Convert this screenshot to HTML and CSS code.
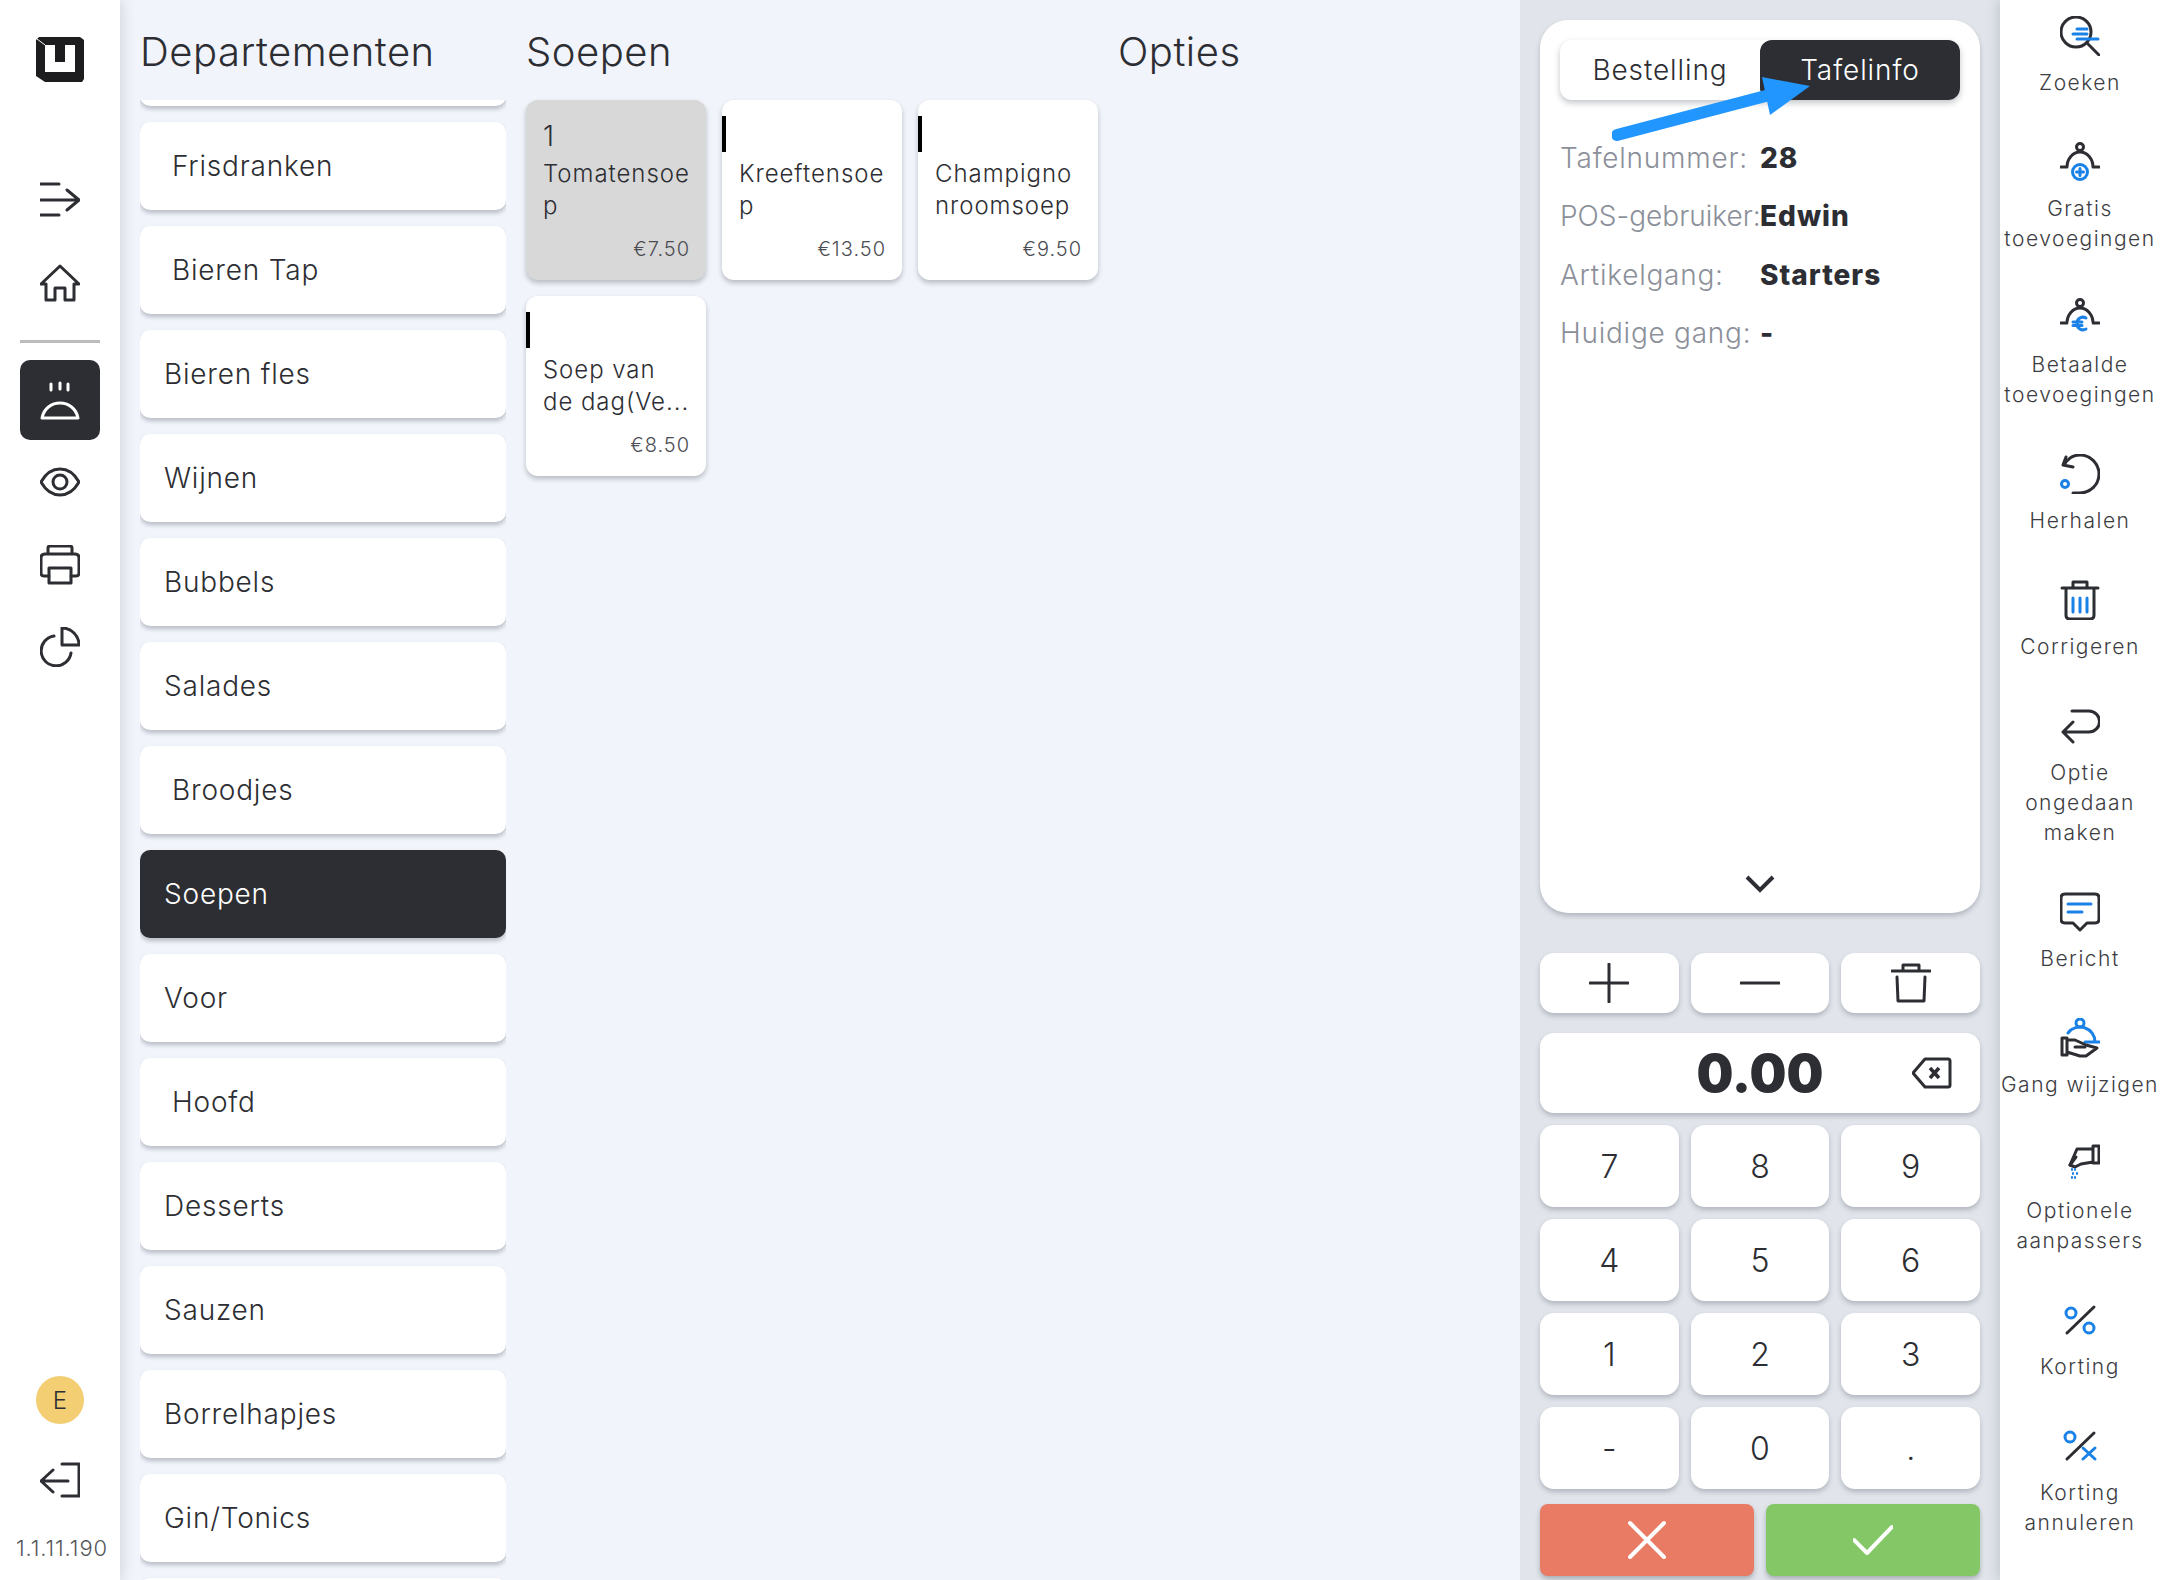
FILE: index.html
```html
<!DOCTYPE html>
<html lang="nl">
<head>
    <meta charset="UTF-8">
    <title>Kassa</title>
    <link rel="stylesheet" href="styles.css">
</head>
<body>
    <div class="app">
        <!-- linker menu -->
        <nav class="rail">
            <svg class="logo" viewBox="0 0 48 45">
                <path class="logo-body" d="M0 3 3 0H44L48 3V42L46 45H9L0 39Z"/>
                <path class="logo-u" d="M9 8H19V25H29V8H39V35H9Z"/>
                <path class="logo-line" d="M1 2 9 8"/>
            </svg>
            <div class="rail-nav">
                <div class="rail-btn">
                    <svg class="icon" viewBox="0 0 40 40"><path d="M0 4H19M0 20H39M27 10 39 20 27 30M0 35H19"/></svg>
                </div>
                <div class="rail-btn">
                    <svg class="icon" viewBox="0 0 40 40"><path d="M1 21 20 3 39 21H34V37H25V25H15V37H6V21Z"/></svg>
                </div>
                <div class="rail-sep"></div>
                <div class="rail-btn active">
                    <svg class="icon" viewBox="0 0 40 40"><path d="M11 4V10M20 3V9M28 4V10M2 38C4 28 12 23 20 23S36 28 38 38Z"/></svg>
                </div>
                <div class="rail-btn">
                    <svg class="icon" viewBox="0 0 40 40"><path d="M1 20C6 11 13 7 20 7S34 11 39 20C34 29 27 33 20 33S6 29 1 20Z"/><circle cx="20" cy="20" r="7"/></svg>
                </div>
                <div class="rail-btn">
                    <svg class="icon" viewBox="0 0 40 40"><path d="M8 8V3Q8 1 10 1H30Q32 1 32 3V8M9 31H4Q1 31 1 28V13Q1 9 5 9H35Q39 9 39 13V28Q39 31 36 31H31"/><path d="M9 23H31V38H9Z"/></svg>
                </div>
                <div class="rail-btn">
                    <svg class="icon" viewBox="0 0 40 40"><path d="M22 1A17 17 0 0 1 39 18H22Z"/><path d="M14 9A15 15 0 1 0 31 26"/></svg>
                </div>
            </div>
            <div class="rail-bottom">
                <div class="avatar">E</div>
                <svg class="icon" viewBox="0 0 40 40"><path d="M22 4H39V36H22M28 21H1M13 10 1 21 13 32"/></svg>
                <div class="version">1.1.11.190</div>
            </div>
        </nav>

        <main class="main">
            <section class="col-dept">
                <h2>Departementen</h2>
                <div class="dept-list">
                    <div class="dept dept-cut"></div>
                    <div class="dept indent">Frisdranken</div>
                    <div class="dept indent">Bieren Tap</div>
                    <div class="dept">Bieren fles</div>
                    <div class="dept">Wijnen</div>
                    <div class="dept">Bubbels</div>
                    <div class="dept">Salades</div>
                    <div class="dept indent">Broodjes</div>
                    <div class="dept selected">Soepen</div>
                    <div class="dept">Voor</div>
                    <div class="dept indent">Hoofd</div>
                    <div class="dept">Desserts</div>
                    <div class="dept">Sauzen</div>
                    <div class="dept">Borrelhapjes</div>
                    <div class="dept">Gin/Tonics</div>
                    <div class="dept"></div>
                </div>
            </section>

            <section class="col-products">
                <h2>Soepen</h2>
                <div class="product-grid">
                    <div class="product picked">
                        <div class="qty">1</div>
                        <div class="name">Tomatensoe<br>p</div>
                        <div class="price">€7.50</div>
                    </div>
                    <div class="product">
                        <span class="mark"></span>
                        <div class="qty"></div>
                        <div class="name">Kreeftensoe<br>p</div>
                        <div class="price">€13.50</div>
                    </div>
                    <div class="product">
                        <span class="mark"></span>
                        <div class="qty"></div>
                        <div class="name">Champigno<br>nroomsoep</div>
                        <div class="price">€9.50</div>
                    </div>
                    <div class="product">
                        <span class="mark"></span>
                        <div class="qty"></div>
                        <div class="name">Soep van<br>de dag(Ve...</div>
                        <div class="price">€8.50</div>
                    </div>
                </div>
            </section>

            <section class="col-options">
                <h2>Opties</h2>
            </section>
        </main>

        <aside class="order">
            <div class="order-card">
                <div class="tabs">
                    <div class="tab">Bestelling</div>
                    <div class="tab on">Tafelinfo</div>
                </div>
                <div class="info">
                    <div class="info-label">Tafelnummer:</div><div class="info-value">28</div>
                    <div class="info-label tight">POS-gebruiker:</div><div class="info-value">Edwin</div>
                    <div class="info-label">Artikelgang:</div><div class="info-value">Starters</div>
                    <div class="info-label">Huidige gang:</div><div class="info-value">-</div>
                </div>
                <svg class="chevron" viewBox="0 0 30 18"><path d="M2 2 15 15 28 2"/></svg>
            </div>

            <div class="keys-top">
                <div class="key"><svg class="icon" viewBox="0 0 40 40"><path d="M20 1V39M1 20H39"/></svg></div>
                <div class="key"><svg class="icon" viewBox="0 0 40 40"><path d="M1 20H39"/></svg></div>
                <div class="key"><svg class="icon" viewBox="0 0 40 40"><path d="M1 8H39M12 8V2H28V8M6 14 7 38H33L34 14"/></svg></div>
            </div>

            <div class="display">
                <span class="amount">0.00</span>
                <svg class="backspace" viewBox="0 0 40 32"><path d="M1 16 13 2H36Q38 2 38 4V28Q38 30 36 30H13Z"/><path class="x" d="M18 11 27 21M27 11 18 21"/></svg>
            </div>

            <div class="keypad">
                <div class="key">7</div>
                <div class="key">8</div>
                <div class="key">9</div>
                <div class="key">4</div>
                <div class="key">5</div>
                <div class="key">6</div>
                <div class="key">1</div>
                <div class="key">2</div>
                <div class="key">3</div>
                <div class="key">-</div>
                <div class="key">0</div>
                <div class="key">.</div>
            </div>

            <div class="actions">
                <div class="action cancel"><svg class="icon" viewBox="0 0 40 40"><path d="M3 3 37 37M37 3 3 37"/></svg></div>
                <div class="action confirm"><svg class="icon" viewBox="0 0 40 40"><path d="M1 20 14 33 39 7"/></svg></div>
            </div>
        </aside>

        <!-- rechter functies -->
        <nav class="tools">
            <div class="tool">
                <svg class="icon" viewBox="0 0 40 40"><circle cx="16" cy="16" r="15"/><path d="M27 27 39 39"/><path class="blue" d="M17 13H27M13 18H27M17 23H38"/></svg>
                <span>Zoeken</span>
            </div>
            <div class="tool">
                <svg class="icon" viewBox="0 0 40 40"><circle cx="20" cy="5" r="3.5"/><path d="M1 25H7M33 25H39M7 25A13 15 0 0 1 33 25"/><circle class="blue fill-white" cx="20" cy="30" r="7.5"/><path class="blue" d="M16.500 30H23.500M20 26.500V33.500"/></svg>
                <span>Gratis<br>toevoegingen</span>
            </div>
            <div class="tool">
                <svg class="icon" viewBox="0 0 40 40"><circle cx="20" cy="5" r="3.500"/><path d="M1 25H7M33 25H39M7 25A13 15 0 0 1 33 25"/><path class="white-gap" d="M11 25H29"/><path class="blue" d="M26 20A6 6 0 0 0 17 25.500A6 6 0 0 0 26 31M13 24H22M13 27.500H22"/></svg>
                <span>Betaalde<br>toevoegingen</span>
            </div>
            <div class="tool">
                <svg class="icon" viewBox="0 0 40 40"><path d="M4 11C8 4 14 1 20 1A19 19 0 0 1 20 39H13M6 3 3 11 13 13"/><circle class="blue" cx="5" cy="30" r="3.500"/></svg>
                <span>Herhalen</span>
            </div>
            <div class="tool">
                <svg class="icon" viewBox="0 0 40 40"><path d="M2 8H38M13 8V2H27V8M6 8V35Q6 39 10 39H30Q34 39 34 35V8"/><path class="blue" d="M13 18V32M20 18V32M27 18V32"/></svg>
                <span>Corrigeren</span>
            </div>
            <div class="tool">
                <svg class="icon" viewBox="0 0 40 40"><path d="M12 5H29A10 10 0 0 1 29 26H3M13 16 3 26 13 36"/></svg>
                <span>Optie<br>ongedaan<br>maken</span>
            </div>
            <div class="tool">
                <svg class="icon" viewBox="0 0 40 40"><path d="M5 2H35Q39 2 39 6V27Q39 31 35 31H27L20 38 13 31H5Q1 31 1 27V6Q1 2 5 2Z"/><path class="blue" d="M8 12H31M8 20H22"/></svg>
                <span>Bericht</span>
            </div>
            <div class="tool">
                <svg class="icon" viewBox="0 0 40 40"><circle class="blue" cx="20" cy="5" r="4"/><path class="blue" d="M8 15A15 15 0 0 1 35 24M25 24H41"/><path d="M2 20H7V37H2ZM7 22H15L26 27 37 30 26 38H20L7 34"/><path d="M15 29H25"/></svg>
                <span>Gang wijzigen</span>
            </div>
            <div class="tool">
                <svg class="icon" viewBox="0 0 40 40"><path d="M33 2H39V19H33ZM33 5H17L10 21 15 23 21 20 33 18"/><path d="M16 13 10 21"/><path class="blue dots" d="M12 25V26M15 25V26M13 29V30M17 29V30M12 33V34M15 33V34"/></svg>
                <span>Optionele<br>aanpassers</span>
            </div>
            <div class="tool">
                <svg class="icon" viewBox="0 0 40 40"><circle class="blue" cx="11" cy="13" r="5"/><circle class="blue" cx="29" cy="28" r="5"/><path d="M34 7 7 33"/></svg>
                <span>Korting</span>
            </div>
            <div class="tool">
                <svg class="icon" viewBox="0 0 40 40"><circle class="blue" cx="10" cy="11" r="5"/><path d="M34 7 7 33"/><path class="blue" d="M23 22 35 33M35 22 23 33"/></svg>
                <span>Korting<br>annuleren</span>
            </div>
        </nav>

        <!-- blauwe aanwijspijl over de tabs -->
        <svg class="arrow" viewBox="0 0 220 80">
            <path class="arrow-line" d="M5 58 165 16"/>
            <path class="arrow-head" d="M150 0 198 9 158 38Z"/>
        </svg>
    </div>
</body>
</html>
```

FILE: styles.css
```css
* {
    box-sizing: border-box;
}

body {
    margin: 0;
    font-family: Inter, "Liberation Sans", sans-serif;
    color: #2d2e33;
    background-color: #f1f4fa;
}

.app {
    position: relative;
    display: flex;
    width: 2160px;
    height: 1580px;
    overflow: hidden;
}

.icon {
    width: 40px;
    height: 40px;
    fill: none;
    stroke: #2d2e33;
    stroke-width: 3;
    stroke-linecap: round;
    stroke-linejoin: round;
    flex-shrink: 0;
}

.icon .blue {
    stroke: #1a81e6;
}

.icon .fill-white {
    fill: white;
}

.icon .white-gap {
    stroke: white;
    stroke-width: 5;
}

.icon .dots {
    stroke-width: 2;
}

/* linker menu */
.rail {
    position: relative;
    z-index: 2;
    display: flex;
    flex-direction: column;
    align-items: center;
    width: 120px;
    height: 100%;
    padding: 37px 0 17px;
    background: white;
    box-shadow: 2px 0 12px rgba(60, 70, 90, 0.18);
}

.logo {
    width: 48px;
    height: 45px;
    margin-bottom: 78px;
}

.logo-body {
    fill: #1d1d1f;
}

.logo-u {
    fill: white;
}

.logo-line {
    stroke: white;
    stroke-width: 1;
    fill: none;
}

.rail-nav {
    display: flex;
    flex-direction: column;
    align-items: center;
    gap: 2.5px;
}

.rail-btn {
    display: flex;
    align-items: center;
    justify-content: center;
    width: 80px;
    height: 80px;
    border-radius: 10px;
}

.rail-btn.active {
    background-color: #2d2e33;
}

.rail-btn.active .icon {
    stroke: white;
}

.rail-sep {
    width: 80px;
    height: 3px;
    margin: 14.5px 0;
    background-color: #bcbcbc;
}

.rail-bottom {
    display: flex;
    flex-direction: column;
    align-items: center;
    gap: 36px;
    margin-top: auto;
}

.avatar {
    display: flex;
    align-items: center;
    justify-content: center;
    width: 48px;
    height: 48px;
    border-radius: 50%;
    background-color: #f3ce73;
    font-size: 24px;
    font-weight: 300;
}

.version {
    margin-top: -3px;
    margin-left: 4px;
    font-size: 22px;
    font-weight: 300;
    line-height: 30px;
    letter-spacing: 0.9px;
    color: #55575d;
    white-space: nowrap;
}

/* middenstuk */
.main {
    display: flex;
    gap: 20px;
    width: 1400px;
    padding-left: 20px;
}

h2 {
    height: 100px;
    margin: 0;
    padding-top: 2px;
    font-size: 40px;
    font-weight: 300;
    line-height: 100px;
    letter-spacing: 0.5px;
    white-space: nowrap;
}

.col-dept {
    display: flex;
    flex-direction: column;
    width: 366px;
    height: 100%;
}

.dept-list {
    display: flex;
    flex-direction: column;
    gap: 16px;
    flex: 1;
    overflow: hidden;
}

.dept {
    flex-shrink: 0;
    display: flex;
    align-items: center;
    height: 88px;
    padding-left: 24px;
    background: white;
    border-radius: 10px;
    box-shadow: 0 3px 4px rgba(40, 45, 60, 0.28);
    font-size: 28px;
    font-weight: 300;
    letter-spacing: 0.8px;
    white-space: nowrap;
}

.dept-cut {
    margin-top: -82px;
}

.dept.indent {
    padding-left: 32px;
}

.dept.selected {
    background-color: #2d2e33;
    color: white;
}

.col-products {
    width: 572px;
}

.product-grid {
    display: grid;
    grid-template-columns: repeat(3, 180px);
    grid-auto-rows: 180px;
    gap: 16px;
}

.product {
    position: relative;
    display: flex;
    flex-direction: column;
    padding: 20px 16px 0 17px;
    background: white;
    border-radius: 12px;
    box-shadow: 0 3px 5px rgba(40, 45, 60, 0.28);
}

.product.picked {
    background-color: #d8d8d8;
}

.mark {
    position: absolute;
    left: 0;
    top: 16px;
    width: 4px;
    height: 36px;
    background-color: black;
}

.qty {
    height: 32px;
    font-size: 28px;
    font-weight: 300;
    line-height: 32px;
}

.name {
    margin-top: 6px;
    font-size: 24px;
    font-weight: 300;
    line-height: 32px;
    letter-spacing: 0.95px;
    white-space: nowrap;
}

.price {
    margin-top: auto;
    margin-bottom: 18px;
    font-size: 20px;
    font-weight: 300;
    line-height: 26px;
    letter-spacing: 1px;
    text-align: right;
    color: #4c4d52;
}

/* bestelling */
.order {
    position: relative;
    display: flex;
    flex-direction: column;
    width: 480px;
    height: 100%;
    padding: 20px 20px 0;
    background-color: #e1e5eb;
}

.order-card {
    display: flex;
    flex-direction: column;
    height: 893px;
    padding: 20px;
    background: white;
    border-radius: 28px;
    box-shadow: 0 3px 5px rgba(40, 45, 60, 0.25);
}

.tabs {
    display: flex;
    height: 60px;
    border-radius: 12px;
    background: white;
    box-shadow: 0 3px 6px rgba(40, 45, 60, 0.28);
}

.tab {
    display: flex;
    align-items: center;
    justify-content: center;
    width: 200px;
    border-radius: 12px;
    font-size: 28px;
    font-weight: 300;
    letter-spacing: 0.9px;
}

.tab.on {
    background-color: #2d2e33;
    color: white;
}

.info {
    display: grid;
    grid-template-columns: 200px 1fr;
    grid-auto-rows: 58.300px;
    align-items: center;
    padding-top: 29px;
}

.info-label {
    font-size: 28px;
    font-weight: 300;
    letter-spacing: 0.75px;
    color: #8c909a;
    white-space: nowrap;
}

.info-label.tight {
    letter-spacing: 0;
}

.info-value {
    font-size: 28px;
    font-weight: 800;
    letter-spacing: 1px;
}

.chevron {
    display: block;
    width: 30px;
    height: 18px;
    margin: auto auto 0;
    fill: none;
    stroke: #2d2e33;
    stroke-width: 4;
}

.keys-top {
    display: grid;
    grid-template-columns: repeat(3, 1fr);
    grid-auto-rows: 60px;
    gap: 12px;
    margin-top: 40px;
}

.key {
    display: flex;
    align-items: center;
    justify-content: center;
    background: white;
    border-radius: 14px;
    box-shadow: 0 3px 5px rgba(40, 45, 60, 0.25);
    font-size: 32px;
    font-weight: 300;
}

.display {
    position: relative;
    display: flex;
    align-items: center;
    justify-content: center;
    height: 80px;
    margin-top: 20px;
    background: white;
    border-radius: 14px;
    box-shadow: 0 3px 5px rgba(40, 45, 60, 0.25);
}

.amount {
    padding-top: 1px;
    font-size: 52px;
    font-weight: 900;
}

.backspace {
    position: absolute;
    right: 28px;
    top: 24px;
    width: 40px;
    height: 32px;
    fill: none;
    stroke: #2d2e33;
    stroke-width: 3;
    stroke-linejoin: round;
}

.backspace .x {
    stroke-width: 3.500;
}

.keypad {
    display: grid;
    grid-template-columns: repeat(3, 1fr);
    grid-auto-rows: 82px;
    gap: 12px;
    margin-top: 12px;
}

.actions {
    display: grid;
    grid-template-columns: 1fr 1fr;
    gap: 12px;
    height: 72px;
    margin-top: 15px;
}

.action {
    display: flex;
    align-items: center;
    justify-content: center;
    border-radius: 8px;
    box-shadow: 0 3px 5px rgba(40, 45, 60, 0.3);
}

.action .icon {
    stroke: white;
    stroke-width: 4;
}

.cancel {
    background-color: #e97a63;
}

.confirm {
    background-color: #83c766;
}

/* rechter functies */
.tools {
    position: relative;
    z-index: 2;
    display: flex;
    flex-direction: column;
    align-items: center;
    gap: 46px;
    width: 160px;
    height: 100%;
    padding-top: 16px;
    background: white;
    box-shadow: -2px 0 12px rgba(60, 70, 90, 0.2);
}

.tool {
    display: flex;
    flex-direction: column;
    align-items: center;
    gap: 12px;
    font-size: 21px;
    font-weight: 300;
    line-height: 30px;
    letter-spacing: 1.500px;
    text-align: center;
    color: #3c3d42;
    white-space: nowrap;
}

.tool span {
    margin-bottom: -2px;
}

.arrow {
    position: absolute;
    z-index: 3;
    left: 1612px;
    top: 77px;
    width: 220px;
    height: 80px;
}

.arrow-line {
    fill: none;
    stroke: #2196ff;
    stroke-width: 12;
    stroke-linecap: round;
}

.arrow-head {
    fill: #2196ff;
}
```
